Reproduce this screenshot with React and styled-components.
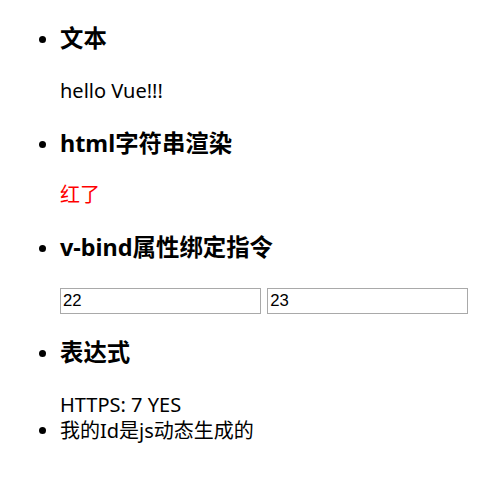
import React, { useState } from 'react';
import styled, { createGlobalStyle } from 'styled-components';

const GlobalStyle = createGlobalStyle`
  body {
    margin: 0 10px;
    font-family: "Noto Sans", "Noto Sans CJK SC", sans-serif;
    color: #000;
    background: #fff;
  }
`;

const List = styled.ul`
  margin: 0 0 20px;
  padding-left: 50px;
  list-style: disc;
`;

const Item = styled.li`
  font-size: 20px;
  line-height: 26.4px;
`;

const Heading = styled.h3`
  font-size: 23.4px;
  line-height: 31px;
  font-weight: 700;
  margin: 23.4px 0;
`;

const Text = styled.p`
  margin: 20px 0;
  color: ${(props) => props.color || '#000'};
`;

const Field = styled.input`
  box-sizing: border-box;
  width: 201px;
  height: 26px;
  padding: 1px 2px;
  border: 1px solid #a9a9a9;
  font-family: "Liberation Sans", Arial, sans-serif;
  font-size: 16.7px;
  color: #000;
  vertical-align: middle;
  outline: none;

  & + & {
    margin-left: 1px;
  }
`;

export default function App() {
  const [first, setFirst] = useState('22');
  const [second, setSecond] = useState('23');
  const ok = true;

  return (
    <>
      <GlobalStyle />
      <List>
        <Item>
          <Heading>文本</Heading>
          <Text>hello Vue!!!</Text>
        </Item>
        <Item>
          <Heading>html字符串渲染</Heading>
          <Text color="red">红了</Text>
        </Item>
        <Item>
          <Heading>v-bind属性绑定指令</Heading>
          <Text>
            <Field value={first} onChange={(e) => setFirst(e.target.value)} />{' '}
            <Field value={second} onChange={(e) => setSecond(e.target.value)} />
          </Text>
        </Item>
        <Item>
          <Heading>表达式</Heading>
          <div>HTTPS: {3 + 4} {ok ? 'YES' : 'NO'}</div>
        </Item>
        <Item id="dynamic-id">我的Id是js动态生成的</Item>
      </List>
    </>
  );
}
